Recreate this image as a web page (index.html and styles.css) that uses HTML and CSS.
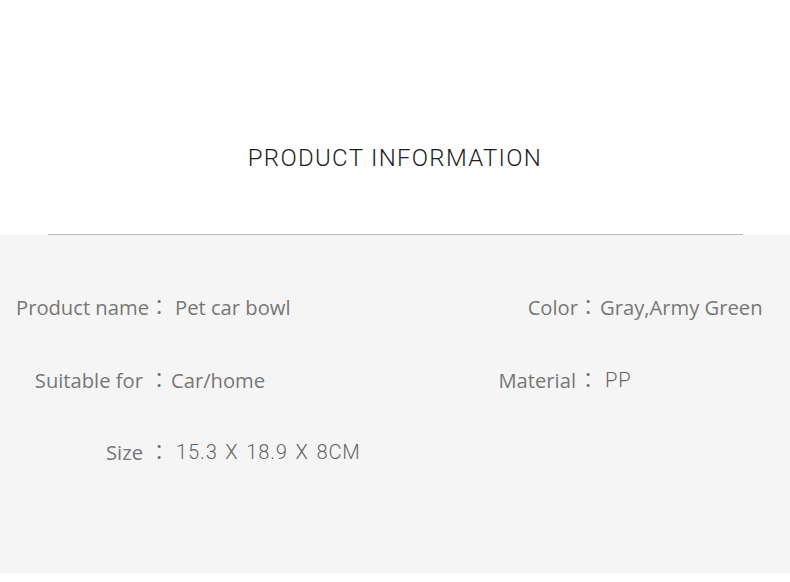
FILE: index.html
```html
<!DOCTYPE html>
<html>
<head>
<meta charset="utf-8">
<link rel="stylesheet" href="styles.css">
</head>
<body>
<div class="page">
  <header class="head">
    <h1 class="title">PRODUCT INFORMATION</h1>
    <div class="rule"></div>
  </header>
  <section class="panel">
    <div class="grid">
      <div class="label">Product name</div><div class="colon">：</div><div class="value">Pet car bowl</div>
      <div class="label">Color</div><div class="colon">：</div><div class="value v-tight">Gray,Army Green</div>

      <div class="label gap">Suitable for</div><div class="colon">：</div><div class="value v-tight">Car/home</div>
      <div class="label gap-s">Material</div><div class="colon">：</div><div class="value thin">PP</div>

      <div class="label gap">Size</div><div class="colon">：</div><div class="value thin">15.3 X 18.9 X 8CM</div>
      <div class="empty"></div><div class="empty"></div><div class="empty"></div>
    </div>
  </section>
  <div class="foot"></div>
</div>
</body>
</html>
```

FILE: styles.css
```css
html, body {
  margin: 0;
  padding: 0;
  background: #ffffff;
}
.page {
  width: 790px;
  height: 582px;
  overflow: hidden;
}
.head {
  height: 235px;
  display: flex;
  flex-direction: column;
  background: #ffffff;
}
.title {
  margin: 142px 0 0 0;
  text-align: center;
  font-family: Roboto, "Liberation Sans", sans-serif;
  font-weight: 300;
  font-size: 24px;
  line-height: 32px;
  letter-spacing: 1.3px;
  color: #1e1e1e;
  flex: none;
}
.rule {
  margin: auto 47px 0 48px;
  height: 0;
  border-top: 1px solid #b9b9b9;
  flex: none;
}
.panel {
  background: #f5f5f5;
  height: 338px;
  box-sizing: border-box;
  padding-top: 57px;
}
.grid {
  display: grid;
  grid-template-columns: 149px 18px 272px 139px 18px 1fr;
  grid-auto-rows: 72.5px;
  align-items: start;
  font-family: "Open Sans", "Noto Sans", sans-serif;
  font-size: 20.2px;
  line-height: 30px;
  color: #777777;
}
.label {
  text-align: right;
}
.gap {
  padding-right: 6px;
}
.gap-s {
  padding-right: 2px;
}
.colon {
  text-align: center;
  font-family: "Noto Sans CJK JP", sans-serif;
}
.value {
  padding-left: 8px;
}
.v-tight {
  padding-left: 4px;
}
.thin {
  padding-left: 9px;
  font-family: Roboto, "Liberation Sans", sans-serif;
  font-weight: 300;
  letter-spacing: 0.8px;
  word-spacing: 2px;
  color: #666666;
}
.foot {
  height: 9px;
  background: #ffffff;
}
```
